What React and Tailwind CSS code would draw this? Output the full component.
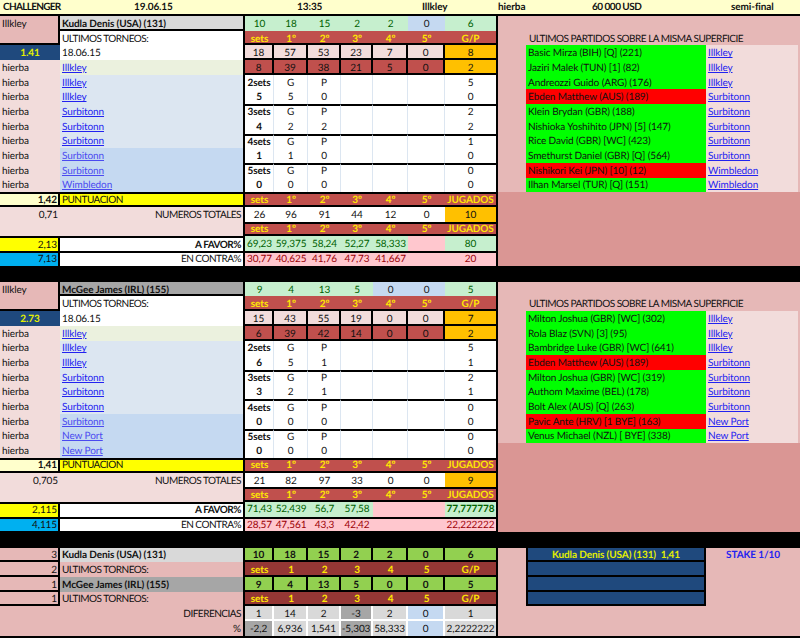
import React from 'react'

// ROW alone suits cells with a top border, PLAIN and LOW nudge the text down for the others
const ROW = 'h-[14.7px] flex items-center whitespace-nowrap leading-none'
const PLAIN = `${ROW} pt-[1px]`
const LOW = `${ROW} pt-[3px]`
const CAPS = 'tracking-[-0.05em]'
const COLS = 'grid grid-cols-[29px_34px_33px_32px_35px_37px_51px]'
const CENTER = 'justify-center'
const HEAD_LABELS = ['sets', '1º', '2º', '3º', '4º', '5º']

const blocks = [
  {
    city: 'Illkley',
    player: 'Kudla Denis (USA) (131)',
    playerBg: 'bg-[#D9D9D9]',
    odds: '1.41',
    date: '18.06.15',
    tournaments: ['Illkley', 'Illkley', 'Illkley', 'Surbitonn', 'Surbitonn', 'Surbitonn', 'Surbitonn', 'Surbitonn', 'Wimbledon'],
    wins: ['10', '18', '15', '2', '2', '0', '6'],
    played: ['18', '57', '53', '23', '7', '0', '8'],
    won: ['8', '39', '38', '21', '5', '0', '2'],
    sets: [
      ['2sets', 'G', 'P', '5'],
      ['5', '5', '0', '0'],
      ['3sets', 'G', 'P', '2'],
      ['4', '2', '2', '2'],
      ['4sets', 'G', 'P', '1'],
      ['1', '1', '0', '0'],
      ['5sets', 'G', 'P', '0'],
      ['0', '0', '0', '0'],
    ],
    score: '1,42',
    half: '0,71',
    totals: ['26', '96', '91', '44', '12', '0', '10'],
    favorLabel: '2,13',
    contraLabel: '7,13',
    favor: ['69,23', '59,375', '58,24', '52,27', '58,333', '', '80'],
    contra: ['30,77', '40,625', '41,76', '47,73', '41,667', '', '20'],
    matches: [
      ['Basic Mirza (BIH) [Q] (221)', 'Illkley', true],
      ['Jaziri Malek (TUN) [1] (82)', 'Illkley', true],
      ['Andreozzi Guido (ARG) (176)', 'Illkley', true],
      ['Ebden Matthew (AUS) (189)', 'Surbitonn', false],
      ['Klein Brydan (GBR) (188)', 'Surbitonn', true],
      ['Nishioka Yoshihito (JPN) [5] (147)', 'Surbitonn', true],
      ['Rice David (GBR) [WC] (423)', 'Surbitonn', true],
      ['Smethurst Daniel (GBR) [Q] (564)', 'Surbitonn', true],
      ['Nishikori Kei (JPN) [10] (12)', 'Wimbledon', false],
      ['Ilhan Marsel (TUR) [Q] (151)', 'Wimbledon', true],
    ],
  },
  {
    city: 'Illkley',
    player: 'McGee James (IRL) (155)',
    playerBg: 'bg-[#A6A6A6]',
    odds: '2.73',
    date: '18.06.15',
    tournaments: ['Illkley', 'Illkley', 'Illkley', 'Surbitonn', 'Surbitonn', 'Surbitonn', 'Surbitonn', 'New Port', 'New Port'],
    wins: ['9', '4', '13', '5', '0', '0', '5'],
    played: ['15', '43', '55', '19', '0', '0', '7'],
    won: ['6', '39', '42', '14', '0', '0', '2'],
    sets: [
      ['2sets', 'G', 'P', '5'],
      ['6', '5', '1', '1'],
      ['3sets', 'G', 'P', '2'],
      ['3', '2', '1', '1'],
      ['4sets', 'G', 'P', '0'],
      ['0', '0', '0', '0'],
      ['5sets', 'G', 'P', '0'],
      ['0', '0', '0', '0'],
    ],
    score: '1,41',
    half: '0,705',
    totals: ['21', '82', '97', '33', '0', '0', '9'],
    favorLabel: '2,115',
    contraLabel: '4,115',
    favor: ['71,43', '52,439', '56,7', '57,58', '', '', '77,777778'],
    contra: ['28,57', '47,561', '43,3', '42,42', '', '', '22,222222'],
    matches: [
      ['Milton Joshua (GBR) [WC] (302)', 'Illkley', true],
      ['Rola Blaz (SVN) [3] (95)', 'Illkley', true],
      ['Bambridge Luke (GBR) [WC] (641)', 'Illkley', true],
      ['Ebden Matthew (AUS) (189)', 'Surbitonn', false],
      ['Milton Joshua (GBR) [WC] (319)', 'Surbitonn', true],
      ['Authom Maxime (BEL) (178)', 'Surbitonn', true],
      ['Bolt Alex (AUS) [Q] (263)', 'Surbitonn', true],
      ['Pavic Ante (HRV) [1 BYE] (163)', 'New Port', false],
      ['Venus Michael (NZL) [ BYE] (338)', 'New Port', true],
    ],
  },
]

function Link({ children, faded }) {
  return <span className={`underline ${faded ? 'text-[#4A4AF0]' : 'text-[#2222F0]'}`}>{children}</span>
}

function HeadRow({ last, base, border }) {
  return (
    <div className={COLS}>
      {[...HEAD_LABELS, last].map((label, i) => (
        <div key={i} className={`${base} ${CENTER} bg-[#C0504D] text-[#FFE800] font-bold ${border}`}>
          {label}
        </div>
      ))}
    </div>
  )
}

function LeftPanel({ data }) {
  return (
    <div className="w-[243px] grid grid-cols-[60px_183px]">
      <div className="row-span-2 bg-[#E6B8B7] border-b-2 border-r-2 border-black px-[2px] pt-[3px] leading-none">{data.city}</div>
      <div className={`${LOW} ${data.playerBg} font-bold pl-[2px] border-b-2 border-black`}>{data.player}</div>
      <div className={`${PLAIN} ${CAPS} bg-white pl-[2px]`}>ULTIMOS TORNEOS:</div>
      <div className={`${PLAIN} ${CENTER} bg-[#1F497D] text-[#E4F000] font-bold`}>{data.odds}</div>
      <div className={`${PLAIN} bg-white pl-[2px]`}>{data.date}</div>
      {data.tournaments.map((t, i) => (
        <React.Fragment key={i}>
          <div className={`${PLAIN} bg-[#F2DCDB] pl-[2px]`}>hierba</div>
          <div className={`${PLAIN} pl-[2px] ${i === 0 ? 'bg-[#EBF1DE]' : i < 6 ? 'bg-[#DCE6F1]' : 'bg-[#C5D9F1]'}`}>
            <Link faded={i >= 6}>{t}</Link>
          </div>
        </React.Fragment>
      ))}
      <div className={`${ROW} justify-end bg-[#FFFFCC] font-bold pr-[1px] border-y-2 border-r-2 border-black`}>{data.score}</div>
      <div className={`${ROW} ${CAPS} bg-[#FFFF00] pl-[2px] border-y-2 border-black`}>PUNTUACION</div>
      <div className={`${PLAIN} justify-end bg-[#F2DCDB] pr-[2px]`}>{data.half}</div>
      <div className={`${PLAIN} ${CAPS} justify-end bg-[#F2DCDB] pr-[2px]`}>NUMEROS TOTALES</div>
      <div className={`${ROW} bg-[#F2DCDB]`} />
      <div className={`${ROW} bg-[#F2DCDB]`} />
      <div className={`${ROW} justify-end bg-[#FFFF00] pr-[1px] border-t-2 border-r-2 border-black`}>{data.favorLabel}</div>
      <div className={`${ROW} ${CAPS} justify-end bg-white font-bold pr-[2px] border-t-2 border-black`}>A FAVOR%</div>
      <div className={`${ROW} justify-end bg-[#00B0F0] pr-[1px] border-t-2 border-r-2 border-black`}>{data.contraLabel}</div>
      <div className={`${ROW} ${CAPS} justify-end bg-white pr-[2px] border-t-2 border-black`}>EN CONTRA%</div>
    </div>
  )
}

function StatsPanel({ data }) {
  return (
    <div className="w-[255px] border-x-2 border-black">
      <div className={COLS}>
        {data.wins.map((v, i) => (
          <div
            key={i}
            className={`${PLAIN} ${CENTER} ${v === '0' && i > 3 && i < 6 ? 'bg-[#C5D9F1] text-[#1a1a1a]' : 'bg-[#C6EFCE] text-[#006100]'}`}
          >
            {v}
          </div>
        ))}
      </div>
      <HeadRow last="G/P" base={LOW} border="border-b-2 border-black" />
      <div className={COLS}>
        {data.played.map((v, i) => (
          <div
            key={i}
            className={`${LOW} ${CENTER} border-b-2 border-black ${i === 6 ? 'bg-[#FFC000]' : 'bg-[#F2DCDB] border-r-2'}`}
          >
            {v}
          </div>
        ))}
      </div>
      <div className={COLS}>
        {data.won.map((v, i) => (
          <div
            key={i}
            className={`${LOW} ${CENTER} border-b-2 border-black ${i === 6 ? 'bg-[#FFC000]' : 'bg-[#C0504D] border-r-2'}`}
          >
            {v}
          </div>
        ))}
      </div>
      {data.sets.map((row, r) => {
        const top = r > 0 && r % 2 === 0
        const base = top ? `${ROW} border-t-2 border-t-black` : PLAIN
        return (
          <div key={r} className={COLS}>
            <div className={`${base} ${CENTER} bg-white font-bold border-r border-r-[#DCE6F1]`}>{row[0]}</div>
            <div className={`${base} ${CENTER} bg-white border-r border-r-[#DCE6F1]`}>{row[1]}</div>
            <div className={`${base} ${CENTER} bg-white border-r border-r-[#DCE6F1]`}>{row[2]}</div>
            <div className={`${base} bg-white border-r border-r-[#DCE6F1]`} />
            <div className={`${base} bg-white border-r border-r-[#DCE6F1]`} />
            <div className={`${base} bg-white border-r border-r-[#DCE6F1]`} />
            <div className={`${base} ${CENTER} bg-white`}>{row[3]}</div>
          </div>
        )
      })}
      <HeadRow last="JUGADOS" base={ROW} border="border-y-2 border-black" />
      <div className={COLS}>
        {data.totals.map((v, i) => (
          <div key={i} className={`${PLAIN} ${CENTER} ${i === 6 ? 'bg-[#FFC000]' : 'bg-white'}`}>{v}</div>
        ))}
      </div>
      <HeadRow last="JUGADOS" base={ROW} border="border-y-2 border-black" />
      <div className={COLS}>
        {data.favor.map((v, i) => (
          <div key={i} className={`${ROW} ${CENTER} ${v === '' ? 'bg-[#FFC7CE]' : 'bg-[#C6EFCE]'} text-[#006100] ${i === 6 && v.length > 3 ? 'font-bold' : ''}`}>{v}</div>
        ))}
      </div>
      <div className={COLS}>
        {data.contra.map((v, i) => (
          <div key={i} className={`${ROW} ${CENTER} bg-[#FFC7CE] text-[#9C0006] border-t-2 border-black`}>{v}</div>
        ))}
      </div>
    </div>
  )
}

function RightPanel({ data }) {
  const filler = 10 - data.matches.length
  return (
    <div className="w-[302px]">
      <div className="h-[14.7px] bg-[#E6B8B7]" />
      <div className={`${PLAIN} ${CAPS} bg-[#E6B8B7] pl-[31px]`}>ULTIMOS PARTIDOS SOBRE LA MISMA SUPERFICIE</div>
      {data.matches.map(([name, place, won], i) => (
        <div key={i} className="grid grid-cols-[28px_180px_92px_2px]">
          <div className={`${PLAIN} bg-[#E6B8B7]`} />
          <div className={`${PLAIN} pl-[2px] ${won ? 'bg-[#00FF00]' : 'bg-[#FF0000]'}`}>{name}</div>
          <div className={`${PLAIN} bg-[#F2DCDB] pl-[2px]`}><Link>{place}</Link></div>
          <div className={`${PLAIN} bg-[#E6B8B7]`} />
        </div>
      ))}
      <div className="bg-[#DA9694]" style={{ height: `${(5 + filler) * 14.7}px` }} />
    </div>
  )
}

function Block({ data }) {
  return (
    <div className="flex">
      <LeftPanel data={data} />
      <StatsPanel data={data} />
      <RightPanel data={data} />
    </div>
  )
}

function Summary() {
  const rows = [
    { n: '3', label: 'Kudla Denis (USA) (131)', bg: 'bg-[#D9D9D9]', vals: ['10', '18', '15', '2', '2', '0', '6'] },
    { n: '2', label: 'ULTIMOS TORNEOS:' },
    { n: '1', label: 'McGee James (IRL) (155)', bg: 'bg-[#A6A6A6]', vals: ['9', '4', '13', '5', '0', '0', '5'] },
    { n: '1', label: 'ULTIMOS TORNEOS:' },
  ]
  const diffs = ['1', '14', '2', '-3', '2', '0', '1']
  const pct = ['-2,2', '6,936', '1,541', '-5,303', '58,333', '0', '2,2222222']
  const grayCell = (v, i) => {
    if (i === 5) return 'bg-[#C5D9F1]'
    return v.startsWith('-') ? 'bg-[#A6A6A6]' : 'bg-[#D9D9D9]'
  }

  return (
    <div className="flex">
      <div className="w-[243px] grid grid-cols-[60px_183px] bg-[#E6B8B7]">
        {rows.map((r, i) => (
          <React.Fragment key={i}>
            <div className={`${LOW} justify-end pr-[1px] border-r-2 border-b-2 border-black`}>{r.n}</div>
            <div className={`${PLAIN} pl-[2px] ${r.bg ? `${r.bg} font-bold` : CAPS}`}>{r.label}</div>
          </React.Fragment>
        ))}
        <div className={`${PLAIN} ${CAPS} col-span-2 justify-end pr-[2px]`}>DIFERENCIAS</div>
        <div className={`${PLAIN} col-span-2 justify-end pr-[2px]`}>%</div>
      </div>
      <div className="w-[255px] border-x-2 border-black">
        {rows.map((r, i) => (
          <div key={i} className={COLS}>
            {r.vals
              ? r.vals.map((v, k) => (
                  <div key={k} className={`${LOW} ${CENTER} bg-[#92D050] border-b-2 border-black font-bold ${k < 6 ? 'border-r-2' : ''}`}>{v}</div>
                ))
              : ['sets', '1', '2', '3', '4', '5', 'G/P'].map((v, k) => (
                  <div key={k} className={`${LOW} ${CENTER} bg-[#953735] text-[#FFE800] font-bold border-b-2 border-black`}>{v}</div>
                ))}
          </div>
        ))}
        <div className={COLS}>
          {diffs.map((v, i) => (
            <div key={i} className={`${LOW} ${CENTER} ${grayCell(v, i)} border-b-2 border-white ${i < 6 ? 'border-r-2' : ''}`}>{v}</div>
          ))}
        </div>
        <div className={COLS}>
          {pct.map((v, i) => (
            <div key={i} className={`${PLAIN} ${CENTER} ${grayCell(v, i)} border-white ${i < 6 ? 'border-r-2' : ''}`}>{v}</div>
          ))}
        </div>
      </div>
      <div className="w-[302px] grid grid-cols-[28px_180px_94px] bg-[#E6B8B7] grid-rows-[repeat(6,14.7px)]">
        <div className="row-span-6" />
        <div className={`${LOW} ${CENTER} bg-[#1F497D] text-[#E4F000] font-bold border-2 border-t-0 border-black`}>Kudla Denis (USA) (131)&nbsp;&nbsp;1,41</div>
        <div className={`${PLAIN} ${CENTER} text-[#2222F0] font-bold`}>STAKE 1/10</div>
        <div className="h-[14.7px] bg-[#1F497D] border-2 border-t-0 border-black" />
        <div />
        <div className="h-[14.7px] bg-[#1F497D] border-2 border-t-0 border-black" />
        <div />
        <div className="h-[14.7px] bg-[#1F497D] border-2 border-t-0 border-black" />
        <div />
      </div>
    </div>
  )
}

export default function App() {
  return (
    <div className="w-[800px] h-[638px] overflow-hidden bg-black text-[10px] tracking-[-0.01em] text-[#111] [text-rendering:geometricPrecision] font-['Lato','Liberation_Sans',sans-serif]">
      <div className="h-[14px] mb-[2px] bg-[#FFFFCC] grid grid-cols-[134px_163px_125px_76px_94px_139px_69px] items-center font-bold leading-none">
        <span className="pl-[3px] tracking-[-0.07em]">CHALLENGER</span>
        <span>19.06.15</span>
        <span>13:35</span>
        <span>Illkley</span>
        <span>hierba</span>
        <span className={CAPS}>60 000 USD</span>
        <span>semi-final</span>
      </div>
      <Block data={blocks[0]} />
      <div className="h-[16px]" />
      <Block data={blocks[1]} />
      <div className="h-[16px]" />
      <Summary />
    </div>
  )
}
